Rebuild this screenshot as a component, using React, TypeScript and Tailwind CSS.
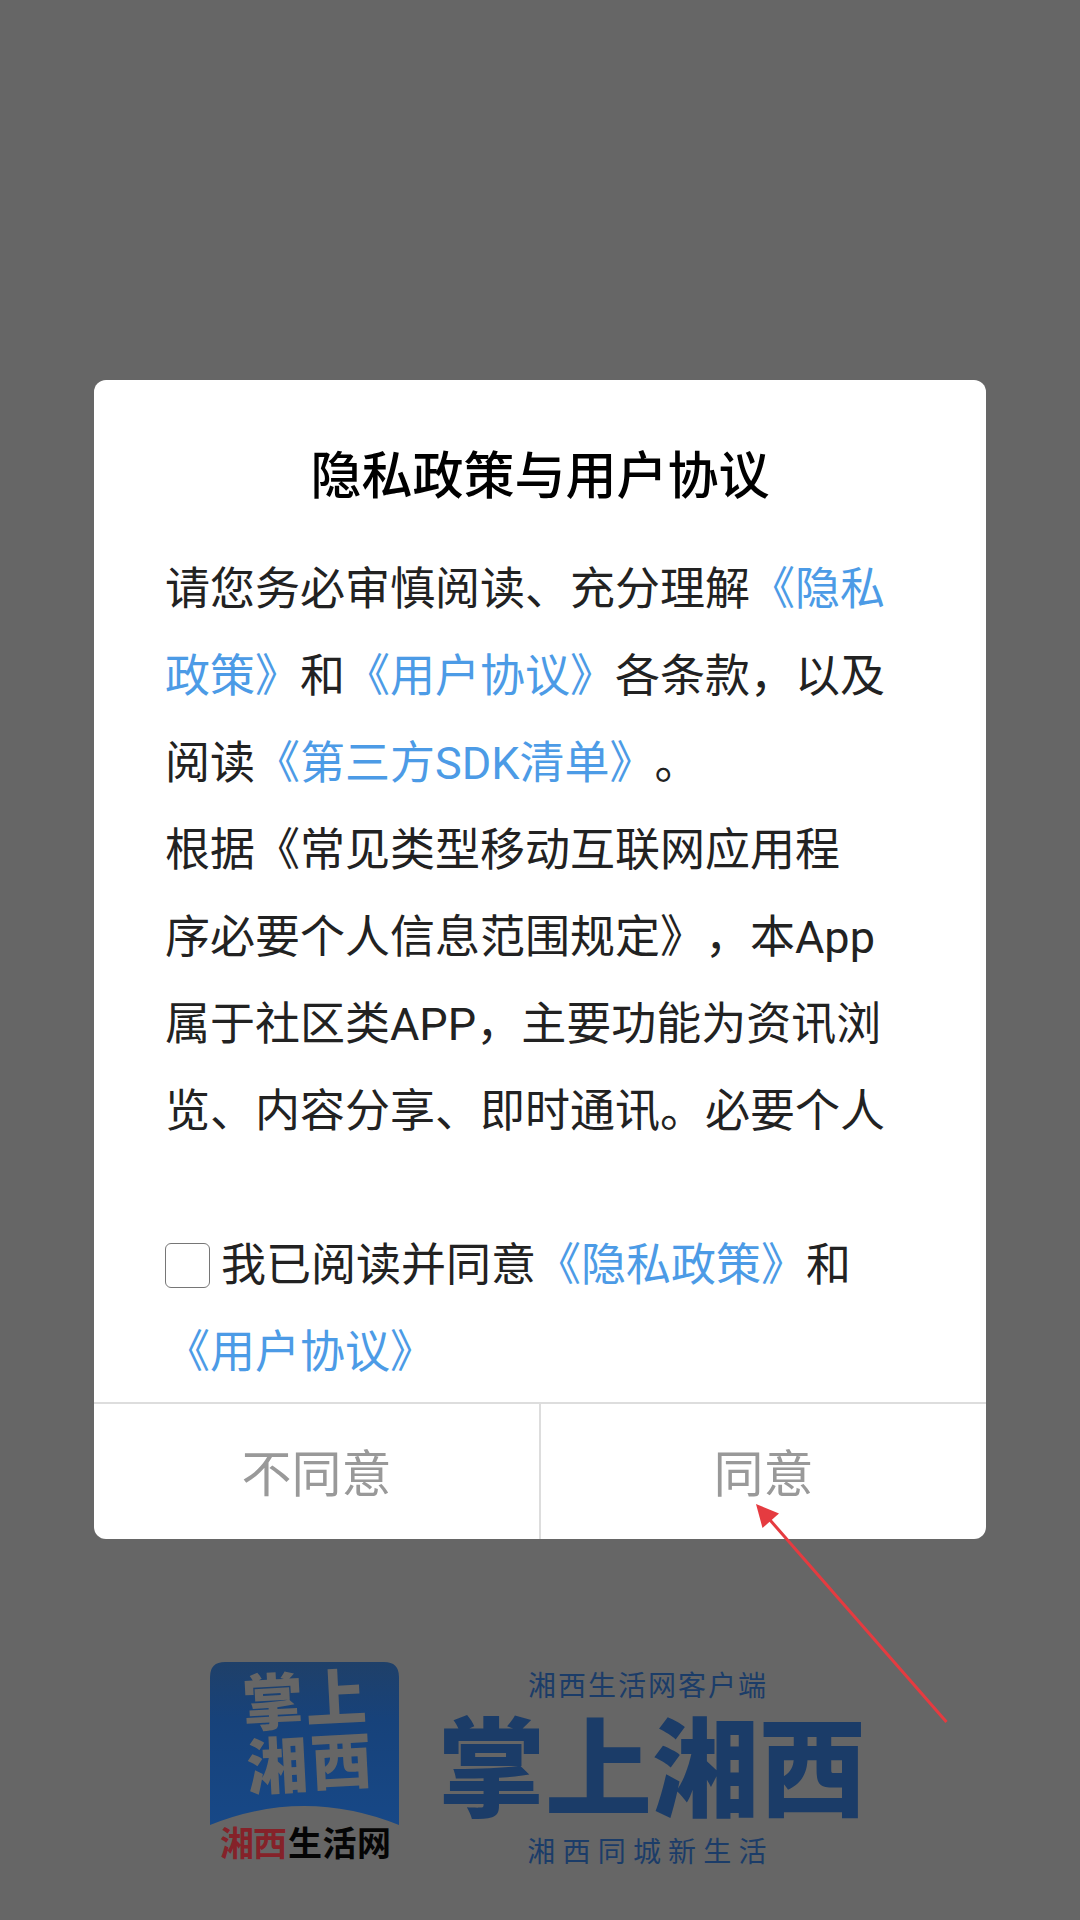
import { useState, type ReactNode } from 'react';

function Doc({ children }: { children: ReactNode }) {
  return <a className="text-[#4c9be6]">{children}</a>;
}

const privacyLines: ReactNode[] = [
  <>请您务必审慎阅读、充分理解<Doc>《隐私</Doc></>,
  <><Doc>政策》</Doc>和<Doc>《用户协议》</Doc>各条款，以及</>,
  <>阅读<Doc>《第三方SDK清单》</Doc>。</>,
  '根据《常见类型移动互联网应用程',
  '序必要个人信息范围规定》，本App',
  '属于社区类APP，主要功能为资讯浏',
  '览、内容分享、即时通讯。必要个人',
];

function AppIcon() {
  return (
    <svg width="190" height="220" viewBox="0 0 190 220" className="shrink-0">
      <defs>
        <linearGradient id="iconBg" x1="0" y1="0" x2="0" y2="1">
          <stop offset="0" stopColor="#1f4069" />
          <stop offset="0.35" stopColor="#17427a" />
          <stop offset="1" stopColor="#174887" />
        </linearGradient>
      </defs>
      <path d="M0 163V15Q0 0 15 0H174Q189 0 189 15V163Q94 125 0 163Z" fill="url(#iconBg)" />
      <g fill="#666666" fontSize="61" fontWeight="900" transform="rotate(-3 95 70)">
        <text x="34" y="61">掌</text>
        <text x="97" y="60">上</text>
        <text x="35" y="125">湘</text>
        <text x="99" y="124">西</text>
      </g>
      <g fontSize="34" fontWeight="700">
        <text x="10" y="194" fill="#852229" textLength="67">湘西</text>
        <text x="78" y="194" fill="#050505" textLength="103">生活网</text>
      </g>
    </svg>
  );
}

function Brand() {
  return (
    <div className="flex pl-[210px] text-[#1b3c68]">
      <AppIcon />
      <div className="ml-[40px] flex w-[424px] flex-col items-center whitespace-nowrap">
        <p className="mt-[5px] h-[40px] pr-[8px] text-[28px] leading-[40px] tracking-[2px]">湘西生活网客户端</p>
        <p className="mt-[10px] h-[110px] text-[107px] leading-[110px] font-black">掌上湘西</p>
        <p className="mt-[6px] h-[40px] pr-[3px] text-[28px] leading-[40px] tracking-[7.2px]">湘西同城新生活</p>
      </div>
    </div>
  );
}

export default function App() {
  const [agreed, setAgreed] = useState(false);

  return (
    <div className="relative flex h-[1920px] w-[1080px] flex-col overflow-hidden bg-[#666666] pt-[380px] font-[Roboto,'Noto_Sans_CJK_SC',sans-serif] [text-spacing-trim:space-all]">
      <div className="mx-auto flex h-[1159px] w-[892px] shrink-0 flex-col overflow-hidden rounded-[12px] bg-white">
        <h1 className="mt-[59px] text-center text-[51px] leading-[76px] font-medium text-black">隐私政策与用户协议</h1>

        <div className="mt-[31px] h-[620px] shrink-0 overflow-hidden pl-[71px] text-[45px] leading-[87px] whitespace-nowrap text-[#222222]">
          {privacyLines.map((line, i) => (
            <p key={i}>{line}</p>
          ))}
        </div>

        <div className="mt-[56px] shrink-0 pl-[71px] text-[45px] leading-[87px] whitespace-nowrap text-[#222222]">
          <label className="flex items-center">
            <input
              type="checkbox"
              checked={agreed}
              onChange={(e) => setAgreed(e.target.checked)}
              className="mr-[11px] size-[45px] appearance-none rounded-[6px] border border-[#767676] bg-white checked:bg-[#4c9be6]"
            />
            <span>我已阅读并同意<Doc>《隐私政策》</Doc>和</span>
          </label>
          <p><Doc>《用户协议》</Doc></p>
        </div>

        <div className="mt-auto flex h-[137px] shrink-0 border-t-2 border-[#dddddd] text-[50px] text-[#999999]">
          <button className="flex-1 border-r-2 border-[#dddddd] pt-[7px]">不同意</button>
          <button className="flex-1 pt-[7px]">同意</button>
        </div>
      </div>

      <div className="mt-[123px]">
        <Brand />
      </div>

      {/* pointer towards the agree button */}
      <svg className="pointer-events-none absolute top-[1500px] left-[750px]" width="200" height="226" viewBox="0 0 200 226">
        <path d="M20 20L196.500 222" stroke="#e53b40" strokeWidth="3" />
        <path d="M6 4L29 13.500L12.500 28Z" fill="#e53b40" />
      </svg>
    </div>
  );
}
